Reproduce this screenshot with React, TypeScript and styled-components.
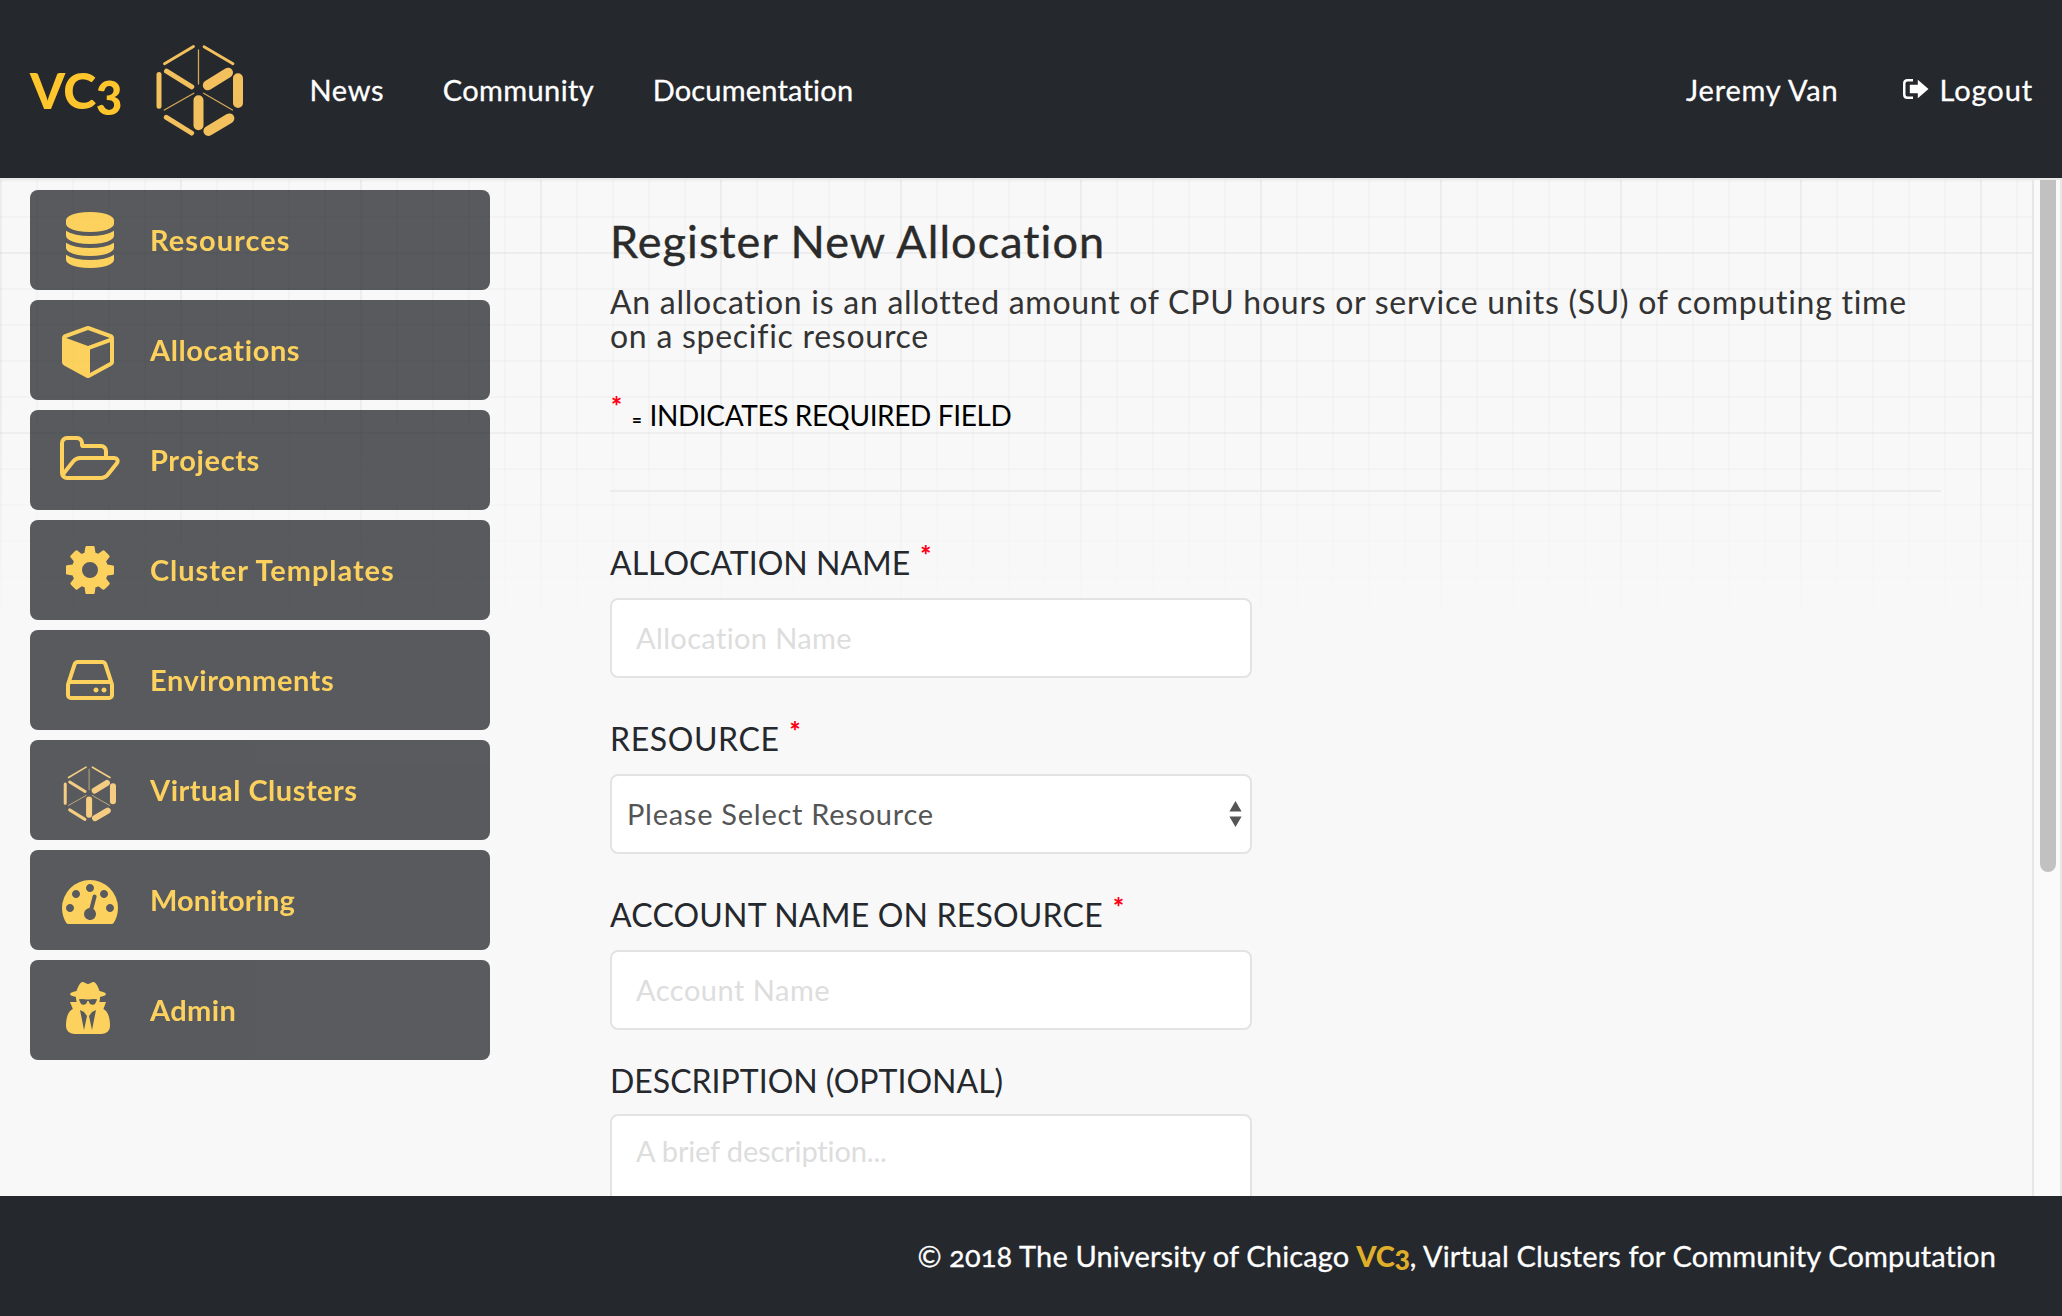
import React from "react";
import styled, { createGlobalStyle } from "styled-components";

const ink = "#25282d";
const gold = "#fec52d";

const GlobalStyle = createGlobalStyle`
  *, *::before, *::after { box-sizing: border-box; }
  body {
    margin: 0;
    background: #f8f8f8;
    font-family: Lato, "Open Sans", sans-serif;
    font-size: 29px;
    font-variant-numeric: oldstyle-nums;
    font-variant-ligatures: none;
    color: #333;
  }
`;

const Page = styled.div`
  display: flex;
  flex-direction: column;
  height: 1316px;
  overflow: hidden;
`;

const Header = styled.header`
  display: flex;
  align-items: center;
  flex: none;
  height: 180px;
  padding: 0 29px 0 30px;
  background: ${ink};
  border-bottom: 2px solid #e9e9e9;
`;

const Brand = styled.a`
  width: 124px;
  padding-top: 1px;
  color: ${gold};
  font-size: 50px;
  font-weight: 900;
  letter-spacing: -0.5px;
`;

const LogoSlot = styled.span`
  display: flex;
  padding-top: 3px;
`;

const Nav = styled.nav<{ $push?: boolean; $gap: number }>`
  display: flex;
  align-items: center;
  gap: ${(p) => p.$gap}px;
  margin-left: ${(p) => (p.$push ? "auto" : "63.5px")};
`;

const NavLink = styled.a<{ $track: number }>`
  display: flex;
  align-items: center;
  gap: 11px;
  color: #fff;
  letter-spacing: ${(p) => p.$track}px;
  -webkit-text-stroke: 0.3px #fff;
`;

const Main = styled.main`
  position: relative;
  display: flex;
  flex: none;
  height: 1016px;
  overflow: hidden;
  isolation: isolate;

  &::before {
    content: "";
    position: absolute;
    z-index: -1;
    inset: 0 30px auto 0;
    height: 432px;
    background:
      repeating-linear-gradient(to right, rgba(0, 0, 0, 0.022) 0 2px, transparent 2px 180px),
      repeating-linear-gradient(to bottom, transparent 0 72px, rgba(0, 0, 0, 0.022) 72px 74px, transparent 74px 180px),
      repeating-linear-gradient(to right, rgba(0, 0, 0, 0.02) 0 2px, transparent 2px 36px),
      repeating-linear-gradient(to bottom, rgba(0, 0, 0, 0.02) 0 2px, transparent 2px 36px);
    mask-image: linear-gradient(to bottom, #000 220px, transparent 460px);
  }
`;

const Sidebar = styled.aside`
  display: flex;
  flex-direction: column;
  gap: 10px;
  width: 520px;
  padding: 10px 30px;
`;

const SideItem = styled.a`
  display: flex;
  flex: none;
  height: 100px;
  padding: 22px 24px 0;
  border-radius: 8px;
  background: ${ink};
  color: ${gold};
  opacity: 0.755;
`;

const IconSlot = styled.span<{ $x?: number; $y?: number }>`
  display: flex;
  justify-content: center;
  width: 72px;
  height: 56px;
  margin: ${(p) => p.$y ?? 0}px 24px 0 ${(p) => p.$x ?? 0}px;
`;

const SideLabel = styled.span<{ $track: number; $x?: number }>`
  margin-left: ${(p) => p.$x ?? 0}px;
  line-height: 55px;
  font-weight: 700;
  letter-spacing: ${(p) => p.$track}px;
`;

const Content = styled.section`
  width: 1331px;
  margin-left: 90px;
  padding-top: 37px;
`;

const Title = styled.h1`
  margin: 0 0 20px;
  color: #2b2b2b;
  font-size: 45px;
  font-weight: 400;
  line-height: 48px;
  letter-spacing: 1.06px;
  -webkit-text-stroke: 0.4px #2b2b2b;
`;

const Lead = styled.p`
  margin: 0 0 42px;
  font-size: 32px;
  line-height: 34px;
  letter-spacing: 0.73px;
`;

const Note = styled.p`
  margin: 0;
  height: 40px;
  line-height: 41px;
  color: #000;
  font-size: 28px;
  letter-spacing: -0.37px;
`;

const Equals = styled.span`
  margin: 0 8px 0 10px;
  font-size: 18px;
  font-weight: 700;
`;

const Star = styled.span<{ $left?: number }>`
  margin-left: ${(p) => p.$left ?? 0}px;
  color: #ff0016;
  font-size: 26px;
  font-weight: 900;
  line-height: 0;
  letter-spacing: 0;
  vertical-align: 10px;
`;

const Rule = styled.hr`
  height: 2px;
  margin: 55px 0 48px;
  border: 0;
  background: #ececec;
`;

const Form = styled.form`
  display: flex;
  flex-direction: column;
  gap: 38px;
  width: 642px;
`;

const Field = styled.div<{ $tight?: boolean }>`
  display: flex;
  flex-direction: column;
  gap: ${(p) => (p.$tight ? 12 : 14)}px;
  margin-top: ${(p) => (p.$tight ? -10 : 0)}px;
`;

const Label = styled.label<{ $track: number }>`
  height: 44px;
  color: ${ink};
  font-size: 32px;
  line-height: 46px;
  letter-spacing: ${(p) => p.$track}px;
  white-space: nowrap;
`;

const control = `
  display: block;
  width: 100%;
  border: 2px solid #e3e3e3;
  border-radius: 8px;
  outline: 0;
  background: #fff;
  font: 29px Lato, "Open Sans", sans-serif;
  &::placeholder { color: #ddd; opacity: 1; }
`;

const Input = styled.input<{ $track: number }>`
  ${control}
  height: 80px;
  padding: 0 24px 2px;
  letter-spacing: ${(p) => p.$track}px;
`;

const TextArea = styled.textarea<{ $track: number }>`
  ${control}
  height: 160px;
  padding: 15px 24px;
  line-height: 40px;
  letter-spacing: ${(p) => p.$track}px;
  resize: none;
`;

const SelectBox = styled.div`
  display: grid;
  align-items: center;
  > * { grid-area: 1 / 1; }
  > svg { justify-self: end; margin-right: 10px; pointer-events: none; }
`;

const Select = styled.select`
  ${control}
  height: 80px;
  padding: 0 40px 2px 15px;
  appearance: none;
  color: #555;
  letter-spacing: 0.74px;
`;

const ScrollTrack = styled.div`
  width: 30px;
  height: 100%;
  margin-left: auto;
  padding-left: 6px;
  border: solid #e7e7e7;
  border-width: 0 2px;
  background: #fafafa;
`;

const ScrollThumb = styled.div`
  width: 16px;
  height: 692px;
  border-radius: 0 0 8px 8px;
  background: #c1c1c1;
`;

const Footer = styled.footer`
  display: flex;
  align-items: center;
  justify-content: flex-end;
  flex: none;
  height: 120px;
  padding: 0 66px 1px 0;
  background: ${ink};
  color: #fff;
  white-space: pre;
`;

const FooterText = styled.span<{ $track: number }>`
  letter-spacing: ${(p) => p.$track}px;
  -webkit-text-stroke: 0.3px #fff;
`;

const FooterBrand = styled.strong`
  margin-left: 7px;
  color: #dfae2b;
  font-weight: 900;
  letter-spacing: -0.3px;
`;

const Hexagon = ({ width, height }: { width: number; height: number }) => (
  <svg width={width} height={height} viewBox="154 42 92 96" fill="none" stroke="#f3c05e" strokeLinecap="round">
    <g strokeWidth="1.3" strokeOpacity="0.85">
      <path d="M198.5 49v34M164.3 109l29.5-16.7M203.6 92.3l28.9 16.7" />
    </g>
    <g strokeWidth="2.8">
      <path d="M164.5 62.7l29-17.2M204 45.7l29 17" />
    </g>
    <g strokeWidth="5">
      <path d="M159 73.5v31.7M166.5 70.2l25.3 15.6M166.3 116.3l25.3 15.7" />
    </g>
    <g strokeWidth="10">
      <path d="M207.8 84.3l20.2-12.6M238 77.3v24.7M198.5 99.3v25M208.4 130l21-12.6" />
    </g>
  </svg>
);

const Glyph = ({ d, wide }: { d: string; wide?: boolean }) => (
  <svg width={wide ? 64 : 56} height="56" viewBox={`0 0 ${wide ? 2048 : 1792} 1792`} fill="currentColor">
    <path d={d} />
  </svg>
);

const DATABASE =
  "M896 768q237 0 443-43t325-127v170q0 69-103 128t-280 93.5-385 34.5-385-34.5-280-93.5-103-128v-170q119 84 325 127t443 43zm0 768q237 0 443-43t325-127v170q0 69-103 128t-280 93.5-385 34.5-385-34.5-280-93.5-103-128v-170q119 84 325 127t443 43zm0-384q237 0 443-43t325-127v170q0 69-103 128t-280 93.5-385 34.5-385-34.5-280-93.5-103-128v-170q119 84 325 127t443 43zm0-1152q208 0 385 34.5t280 93.5 103 128v128q0 69-103 128t-280 93.5-385 34.5-385-34.5-280-93.5-103-128v-128q0-69 103-128t280-93.5 385-34.5z";
const CUBE =
  "M896 1629l640-349v-636l-640 233v752zm-64-865l698-254-698-254-698 254zm832-252v768q0 35-18 65t-49 47l-704 384q-28 16-61 16t-61-16l-704-384q-31-17-49-47t-18-65v-768q0-40 23-73t61-47l704-256q22-8 44-8t44 8l704 256q38 14 61 47t23 73z";
const FOLDER =
  "M1845 931q0-35-53-35h-1088q-40 0-85.5 21.5t-71.5 52.5l-294 363q-18 24-18 40 0 35 53 35h1088q40 0 86-22t71-53l294-363q18-22 18-39zm-1141-163h768v-160q0-40-28-68t-68-28h-576q-40 0-68-28t-28-68v-64q0-40-28-68t-68-28h-320q-40 0-68 28t-28 68v853l256-315q44-53 116-87.5t140-34.5zm1269 163q0 62-46 120l-295 363q-43 53-116 87.5t-140 34.5h-1088q-92 0-158-66t-66-158v-960q0-92 66-158t158-66h320q92 0 158 66t66 158v32h544q92 0 158 66t66 158v160h192q54 0 99 24.5t67 70.5q15 32 15 68z";
const COG =
  "M1152 896q0-106-75-181t-181-75-181 75-75 181 75 181 181 75 181-75 75-181zm512-109v222q0 12-8 23t-20 13l-185 28q-19 54-39 91 35 50 107 138 10 12 10 25t-9 23q-27 37-99 108t-94 71q-12 0-26-9l-138-108q-44 23-91 38-16 136-29 186-7 28-36 28h-222q-14 0-24.5-8.5t-11.5-21.5l-28-184q-49-16-90-37l-141 107q-10 9-25 9-14 0-25-11-126-114-165-168-7-10-7-23 0-12 8-23 15-21 51-66.5t54-70.5q-27-50-41-99l-183-27q-13-2-21-12.5t-8-23.5v-222q0-12 8-23t19-13l186-28q14-46 39-92-40-57-107-138-10-12-10-24 0-10 9-23 26-36 98.5-107.5t94.5-71.5q13 0 26 10l138 107q44-23 91-38 16-136 29-186 7-28 36-28h222q14 0 24.5 8.5t11.5 21.5l28 184q49 16 90 37l142-107q9-9 24-9 13 0 25 10 129 119 165 170 7 8 7 22 0 12-8 23-15 21-51 66.5t-54 70.5q26 50 41 98l183 28q13 2 21 12.5t8 23.5z";
const DRIVE =
  "M1168 1216q0 33-23.5 56.5t-56.5 23.5-56.5-23.5-23.5-56.5 23.5-56.5 56.5-23.5 56.5 23.5 23.5 56.5zm256 0q0 33-23.5 56.5t-56.5 23.5-56.5-23.5-23.5-56.5 23.5-56.5 56.5-23.5 56.5 23.5 23.5 56.5zm112 160v-320q0-13-9.5-22.5t-22.5-9.5h-1216q-13 0-22.5 9.5t-9.5 22.5v320q0 13 9.5 22.5t22.5 9.5h1216q13 0 22.5-9.5t9.5-22.5zm-1230-480h1180l-157-482q-4-13-16-21.5t-26-8.5h-782q-14 0-26 8.5t-16 21.5zm1358 160v320q0 66-47 113t-113 47h-1216q-66 0-113-47t-47-113v-320q0-25 16-75l197-606q17-53 63-86t101-33h782q55 0 101 33t63 86l197 606q16 50 16 75z";
const GAUGE =
  "M384 1152q0-53-37.5-90.5t-90.5-37.5-90.5 37.5-37.5 90.5 37.5 90.5 90.5 37.5 90.5-37.5 37.5-90.5zm192-448q0-53-37.5-90.5t-90.5-37.5-90.5 37.5-37.5 90.5 37.5 90.5 90.5 37.5 90.5-37.5 37.5-90.5zm428 481l101-382q6-26-7.5-48.5t-38.5-29.5-48 6.5-30 39.5l-101 382q-60 5-107 43.5t-63 98.5q-20 77 20 146t117 89 146-20 89-117q16-60-6-117t-72-91zm660-33q0-53-37.5-90.5t-90.5-37.5-90.5 37.5-37.5 90.5 37.5 90.5 90.5 37.5 90.5-37.5 37.5-90.5zm-640-640q0-53-37.5-90.5t-90.5-37.5-90.5 37.5-37.5 90.5 37.5 90.5 90.5 37.5 90.5-37.5 37.5-90.5zm448 192q0-53-37.5-90.5t-90.5-37.5-90.5 37.5-37.5 90.5 37.5 90.5 90.5 37.5 90.5-37.5 37.5-90.5zm320 448q0 261-141 483-19 29-54 29h-1402q-35 0-54-29-141-221-141-483 0-182 71-348t191-286 286-191 348-71 348 71 286 191 191 286 71 348z";
const AGENT =
  "M768 1536l96-448-96-128-128-64zm256 0l128-640-128 64-96 128zm160-980q-2-4-4-6-10-8-96-8-70 0-167 19-7 2-21 2t-21-2q-97-19-167-19-86 0-96 8-2 2-4 6 2 18 4 27 2 3 7.5 6.5t7.5 10.5q2 4 7.5 20.5t7 20.5 7.5 17 8.5 17 9 14 12 13.5 14 9.5 17.5 8 20.5 4 24.5 2q36 0 59-12.5t32.5-30 14.5-34.5 11.5-29.5 17.5-12.5h12q11 0 17.5 12.5t11.5 29.5 14.5 34.5 32.5 30 59 12.5q13 0 24.5-2t20.5-4 17.5-8 14-9.5 12-13.5 9-14 8.5-17 7.5-17 7-20.5 7.5-20.5q2-7 7.5-10.5t7.5-6.5q2-9 4-27zm416 849q0 121-73 190t-194 69h-874q-121 0-194-69t-73-190q0-61 4.5-118t19-125.5 37.5-123.5 63.5-103.5 93.5-74.5l-90-220h214q-22-64-22-128 0-12 2-32-194-40-194-96 0-57 210-99 17-62 51.5-134t70.5-114q32-37 76-37 30 0 84 31t84 31 84-31 84-31q44 0 76 37 36 42 70.5 114t51.5 134q210 42 210 99 0 56-194 96 7 81-20 160h214l-82 225q63 33 107.5 96.5t65.5 143.5 29 151.5 8 148.5z";

const LogoutIcon = () => (
  <svg width="26" height="20" viewBox="0 0 26 20">
    <path d="M10 1.25H4.5Q1.25 1.25 1.25 4.5v11Q1.25 18.75 4.5 18.75H10" fill="none" stroke="#fff" strokeWidth="2.5" />
    <path d="M6.8 5.7h8V.8L25.5 10 14.8 19.2V14.3h-8z" fill="#fff" />
  </svg>
);

const sideItems = [
  { label: "Resources", icon: <Glyph d={DATABASE} />, track: 1.03 },
  { label: "Allocations", icon: <Glyph d={CUBE} />, track: 0.6 },
  { label: "Projects", icon: <Glyph d={FOLDER} wide />, track: 0.6 },
  { label: "Cluster Templates", icon: <Glyph d={COG} />, track: 0.93 },
  { label: "Environments", icon: <Glyph d={DRIVE} />, track: 0.52 },
  { label: "Virtual Clusters", icon: <Hexagon width={56} height={58} />, track: 0.5, iconY: 3 },
  { label: "Monitoring", icon: <Glyph d={GAUGE} />, track: 0.02 },
  { label: "Admin", icon: <Glyph d={AGENT} />, track: 0.4, iconX: -2, x: 2 },
];

export default function App() {
  return (
    <Page>
      <GlobalStyle />
      <Header>
        <Brand>VC3</Brand>
        <LogoSlot>
          <Hexagon width={92} height={96} />
        </LogoSlot>
        <Nav $gap={58.5}>
          <NavLink $track={0.68}>News</NavLink>
          <NavLink $track={0.38}>Community</NavLink>
          <NavLink $track={0.2}>Documentation</NavLink>
        </Nav>
        <Nav $push $gap={64}>
          <NavLink $track={0.8}>Jeremy Van</NavLink>
          <NavLink $track={0.9}>
            <LogoutIcon />
            Logout
          </NavLink>
        </Nav>
      </Header>
      <Main>
        <Sidebar>
          {sideItems.map((item) => (
            <SideItem key={item.label}>
              <IconSlot $x={item.iconX} $y={item.iconY}>{item.icon}</IconSlot>
              <SideLabel $track={item.track} $x={item.x}>{item.label}</SideLabel>
            </SideItem>
          ))}
        </Sidebar>
        <Content>
          <Title>Register New Allocation</Title>
          <Lead>
            An allocation is an allotted amount of CPU hours or service units (SU) of computing time on a specific
            resource
          </Lead>
          <Note>
            <Star $left={1}>*</Star>
            <Equals>=</Equals>
            INDICATES REQUIRED FIELD
          </Note>
          <Rule />
          <Form>
            <Field>
              <Label $track={0}>
                ALLOCATION NAME<Star $left={10}>*</Star>
              </Label>
              <Input $track={0.36} placeholder="Allocation Name" />
            </Field>
            <Field>
              <Label $track={0.61}>
                RESOURCE<Star $left={10}>*</Star>
              </Label>
              <SelectBox>
                <Select>
                  <option>Please Select Resource</option>
                </Select>
                <svg width="13" height="26" viewBox="0 0 13 26" fill="#555">
                  <path d="M.4 10.500 6.500 0l6.100 10.500zM.4 15.500h12.200L6.500 26z" />
                </svg>
              </SelectBox>
            </Field>
            <Field>
              <Label $track={0.2}>
                ACCOUNT NAME ON RESOURCE<Star $left={10}>*</Star>
              </Label>
              <Input $track={0.5} placeholder="Account Name" />
            </Field>
            <Field $tight>
              <Label $track={0}>DESCRIPTION (OPTIONAL)</Label>
              <TextArea $track={-0.15} placeholder="A brief description..." />
            </Field>
          </Form>
        </Content>
        <ScrollTrack>
          <ScrollThumb />
        </ScrollTrack>
      </Main>
      <Footer>
        <FooterText $track={0.13}>© 2018 The University of Chicago</FooterText>
        <FooterBrand>VC3</FooterBrand>
        <FooterText $track={0.12}>, Virtual Clusters for Community Computation</FooterText>
      </Footer>
    </Page>
  );
}
